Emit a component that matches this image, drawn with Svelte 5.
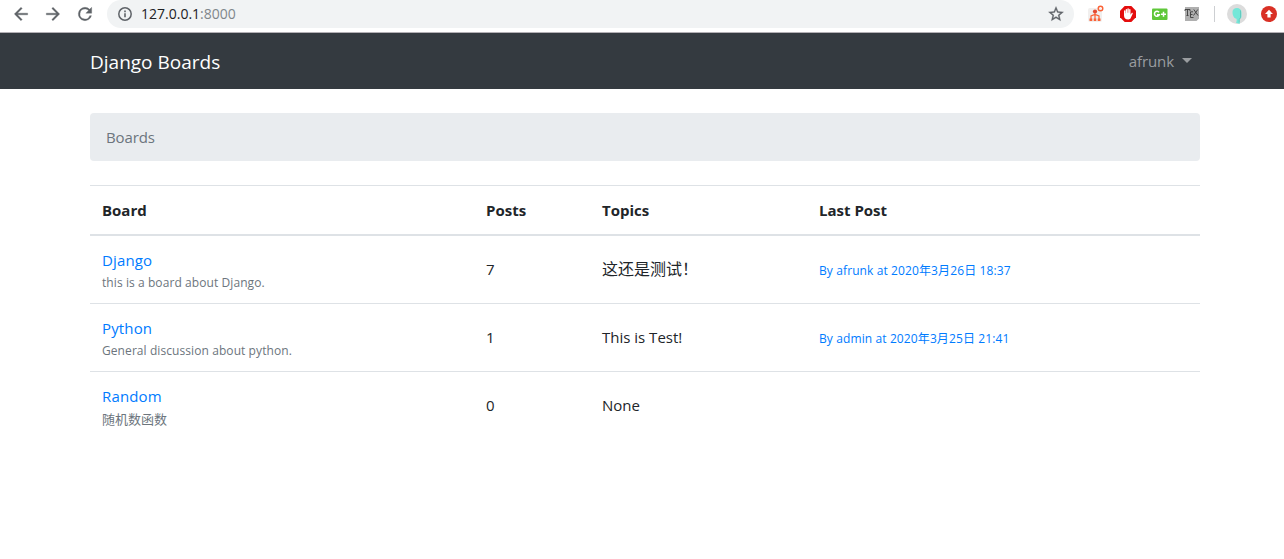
<script>
  const boards = [
    { name: 'Django', about: 'this is a board about Django.', posts: 7, topic: '这还是测试！', last: 'By afrunk at 2020年3月26日 18:37' },
    { name: 'Python', about: 'General discussion about python.', posts: 1, topic: 'This is Test!', last: 'By admin at 2020年3月25日 21:41' },
    { name: 'Random', about: '随机数函数', posts: 0, topic: 'None', last: '' }
  ];
  const isCjk = (text) => /^[\u4e00-\u9fff]/.test(text);
</script>

<div class="toolbar">
  <svg class="nav" viewBox="0 0 24 24"><path d="M20 11H7.8l5.6-5.6L12 4l-8 8 8 8 1.4-1.4L7.8 13H20z" /></svg>
  <svg class="nav" viewBox="0 0 24 24"><path d="M4 11h12.2l-5.6-5.6L12 4l8 8-8 8-1.4-1.4 5.6-5.6H4z" /></svg>
  <svg class="nav" viewBox="0 0 24 24"><path d="M17.65 6.35A7.96 7.96 0 0 0 12 4a8 8 0 1 0 7.73 10h-2.08A6 6 0 1 1 12 6c1.66 0 3.14.69 4.22 1.78L13 11h7V4z" /></svg>
  <div class="address">
    <svg class="info" viewBox="0 0 16 16"><circle cx="8" cy="8" r="6.2" fill="none" stroke="#5f6368" stroke-width="1.5" /><path d="M7.2 7.2h1.6v4H7.2zM7.2 4.6h1.6v1.6H7.2z" fill="#5f6368" /></svg>
    <span class="url">127.0.0.1<span>:8000</span></span>
    <svg class="star" viewBox="0 0 24 24"><path d="M22 9.24l-7.19-.62L12 2 9.19 8.63 2 9.24l5.46 4.73L5.82 21 12 17.27 18.18 21l-1.63-7.03zM12 15.4l-3.76 2.27 1-4.28-3.32-2.88 4.38-.38L12 6.1l1.71 4.04 4.38.38-3.32 2.88 1 4.28z" /></svg>
  </div>
  <div class="extensions">
    <svg width="18" height="18" viewBox="0 0 18 18">
      <rect x="1" y="3" width="14" height="14" rx="2" fill="#f1efee" />
      <circle cx="13.5" cy="3.5" r="2.3" fill="none" stroke="#fa6237" stroke-width="1.4" />
      <circle cx="8" cy="6.5" r="2.1" fill="#e34b32" />
      <path d="M8 8v7M4 14v-3l4-1.500 4 1.500v3" fill="none" stroke="#fa6237" stroke-width="1.2" />
      <path d="M2.500 13.500h2.800v2.500H2.500zM6.700 13.500h2.600v2.500H6.700zM10.700 13.500h2.800v2.500h-2.800z" fill="#fa6237" />
    </svg>
    <svg width="16" height="16" viewBox="0 0 16 16">
      <path d="M4.7 0h6.6L16 4.7v6.6L11.3 16H4.7L0 11.3V4.7z" fill="#e40d0d" />
      <path d="M4 8.2V5a.7.7 0 0 1 1.400 0v2.300h.3V3.600a.7.7 0 0 1 1.400 0v3.200h.3V3a.7.7 0 0 1 1.400 0v3.800h.3V3.700a.7.7 0 0 1 1.400 0v5l1-1.500c.6-.7 1.600-.2 1.200.6L10.700 12c-.5 1-1.200 1.400-2.400 1.400C5.500 13.400 4 12 4 9.500z" fill="#fff" />
    </svg>
    <svg width="16" height="16" viewBox="0 0 16 16">
      <rect x="0" y="2.500" width="15.500" height="11.500" rx="1" fill="#5fc73a" />
      <path d="M7 6.300A2.500 2.500 0 1 0 7.300 8.700H5M9 8.300h5M11.500 5.800v5" fill="none" stroke="#fff" stroke-width="1.500" />
    </svg>
    <svg width="16" height="16" viewBox="0 0 16 16">
      <path d="M1 1h14v11.500L12.500 15H1z" fill="#afafaf" />
      <path d="M1 5V3.500h5V5M3.500 3.500v6M2.500 9.500h2M9 5.800H6.500v5.700H9.500M6.500 8.500h2M9.800 3.500l4.200 6M13.800 3.500l-4.300 6" fill="none" stroke="#3d3d3d" stroke-width=".9" />
    </svg>
    <i class="rule"></i>
    <svg width="20" height="20" viewBox="0 0 20 20">
      <circle cx="10" cy="10" r="10" fill="#dcdcdc" />
      <path d="M5.500 8C5.500 5.300 7.500 4 10 4s4.500 1.500 4.500 4.500v4c0 1.500-1.200 2-1.800 3V20L9 18.800c.8-1.500.8-2.500.5-4C7 14.500 5.500 11.500 5.500 8z" fill="#74e7d8" />
      <path d="M13.500 6.500v7l-1.300 2v3" fill="none" stroke="#55b9b0" stroke-width=".6" />
    </svg>
    <svg width="16" height="16" viewBox="0 0 16 16">
      <circle cx="8" cy="8" r="8" fill="#d93025" />
      <path d="M8 3.800l4 4.300H9.600v3.400H6.400V8.100H4z" fill="#fff" />
    </svg>
  </div>
</div>

<header>
  <div class="container bar">
    <span class="brand">Django Boards</span>
    <span class="user">afrunk<i></i></span>
  </div>
</header>

<main class="container">
  <nav class="crumb">Boards</nav>
  <div class="table">
    <div class="row head">
      <b>Board</b><b>Posts</b><b>Topics</b><b>Last Post</b>
    </div>
    {#each boards as b}
      <div class="row">
        <div class="board">
          <span class="name">{b.name}</span>
          <small class:cjk={isCjk(b.about)}>{b.about}</small>
        </div>
        <span class="cell">{b.posts}</span>
        <span class="cell" class:cjk={isCjk(b.topic)}>{b.topic}</span>
        <small class="last">{b.last}</small>
      </div>
    {/each}
  </div>
</main>

<style>
  :global(body) {
    margin: 0;
    background: #fff;
    color: #212529;
    font: 15px/24px "Open Sans", "Noto Sans CJK SC", sans-serif;
  }
  svg { display: block; flex: none; }
  .toolbar {
    height: 33px;
    box-sizing: border-box;
    border-bottom: 1px solid #b3b0b5;
    display: flex;
    align-items: flex-start;
    padding-left: 11px;
  }
  .nav { width: 20px; height: 20px; margin: 4px 12px 0 0; fill: #5f6368; stroke: #5f6368; stroke-width: 0.4; }
  .address {
    width: 967px;
    height: 28px;
    box-sizing: border-box;
    border-radius: 14px;
    background: #f1f3f4;
    padding: 0 9px 0 10px;
    display: flex;
    align-items: center;
  }
  .info { width: 16px; height: 16px; margin-right: 8px; }
  .url { flex: 1; font-size: 14px; color: #202124; }
  .url span { color: #80868b; }
  .star { width: 18px; height: 18px; fill: #5f6368; stroke: #5f6368; stroke-width: 0.4; }
  .extensions { height: 28px; display: flex; align-items: center; padding-left: 13px; }
  .extensions svg:nth-child(1) { margin-right: 15px; }
  .extensions svg:nth-child(2), .extensions svg:nth-child(3) { margin-right: 16px; }
  .rule { width: 1px; height: 16px; background: #cdcfd2; margin: 0 12px 0 14px; }
  .extensions svg:nth-child(6) { margin-right: 14px; }
  header { background: #343a40; height: 56px; }
  .container { width: 1110px; margin: 0 0 0 90px; }
  .bar { display: flex; justify-content: space-between; align-items: center; height: 56px; }
  .brand { color: #fff; font-size: 19px; padding-top: 1px; }
  .user { color: #9a9da0; padding-right: 8px; display: flex; align-items: center; letter-spacing: -0.1px; }
  .user i {
    border: 5px solid transparent;
    border-top-color: #9a9da0;
    border-bottom: 0;
    margin: -2px 0 0 8px;
  }
  .crumb {
    margin: 24px 0;
    padding: 12px 16px;
    background: #e9ecef;
    border-radius: 4px;
    color: #6c757d;
    letter-spacing: -0.1px;
  }
  .row {
    display: grid;
    grid-template-columns: 384px 116px 217px 393px;
    align-items: center;
    height: 68px;
    box-sizing: border-box;
    border-top: 1px solid #dee2e6;
  }
  .row > * { padding: 0 12px; }
  .row.head { height: 51px; border-bottom: 2px solid #dee2e6; }
  .head + .row { border-top: 0; height: 67px; }
  .row .cell { padding-bottom: 2px; }
  .cell.cjk { font-size: 16px; }
  .board { display: flex; flex-direction: column; }
  .name { color: #007bff; height: 25px; margin-bottom: -1px; letter-spacing: 0.15px; }
  small { font-size: 12px; line-height: 20px; color: #6c757d; letter-spacing: 0.08px; }
  .board small { padding-top: 1px; margin-bottom: -1px; }
  small.cjk { font-size: 13px; letter-spacing: 0; }
  .row .last { color: #007bff; padding-top: 2px; letter-spacing: 0.11px; }
</style>
